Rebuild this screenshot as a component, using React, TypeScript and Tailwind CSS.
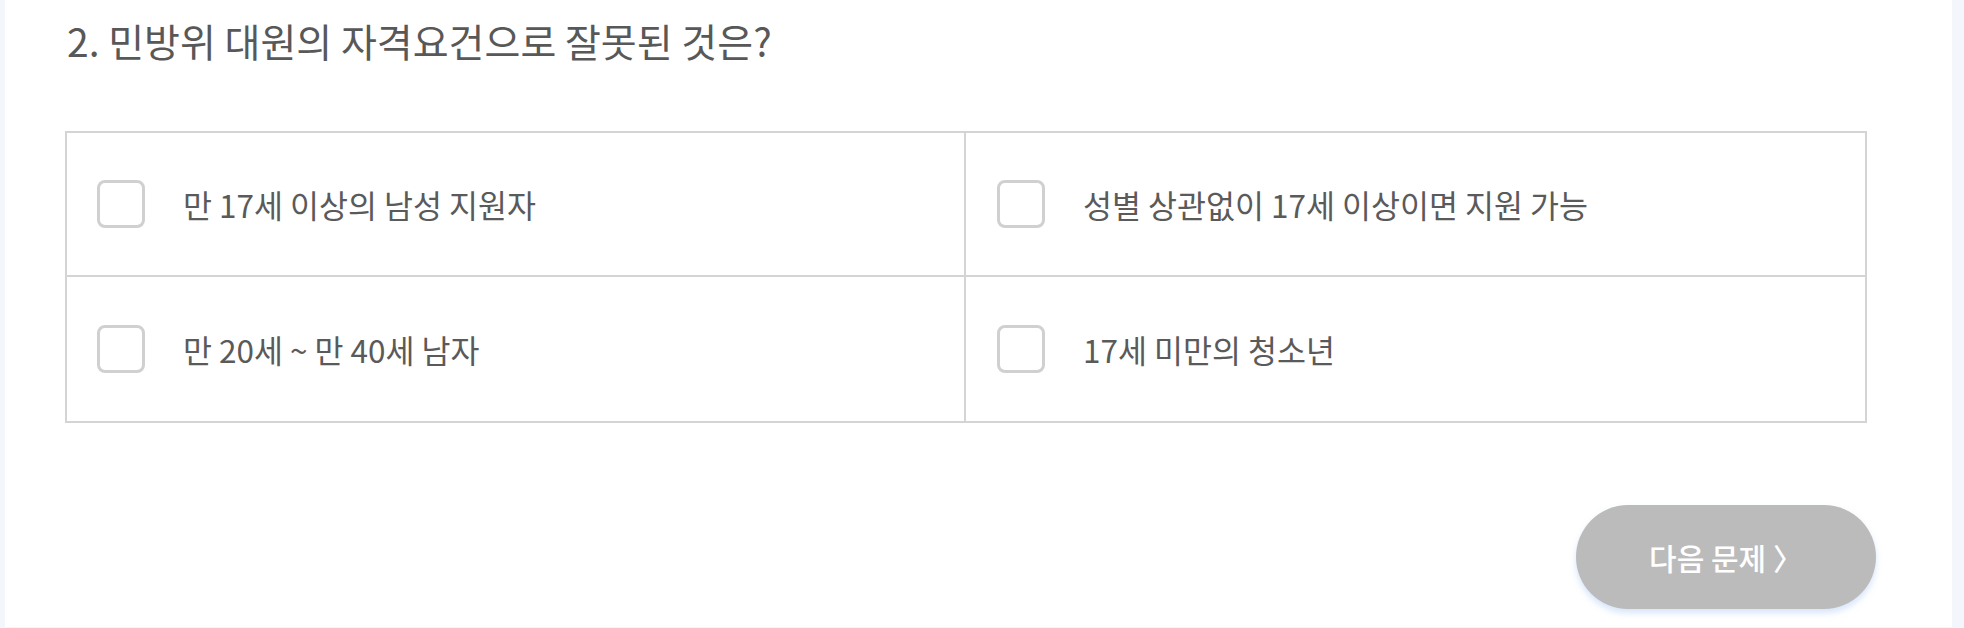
import React from "react";

type Option = {
  id: number;
  label: string;
};

const options: Option[] = [
  { id: 1, label: "만 17세 이상의 남성 지원자" },
  { id: 2, label: "성별 상관없이 17세 이상이면 지원 가능" },
  { id: 3, label: "만 20세 ~ 만 40세 남자" },
  { id: 4, label: "17세 미만의 청소년" },
];

function OptionCell({ option, index }: { option: Option; index: number }) {
  const isLeft = index % 2 === 0;
  const isTop = index < 2;
  return (
    <label
      className={`flex h-[144px] cursor-pointer items-center pl-[30px] ${isLeft ? "border-r-2 border-[#d4d4d4]" : "pl-[31px]"} ${
        isTop ? "border-b-2 border-[#d4d4d4]" : ""
      }`}
    >
      <span className="h-[48px] w-[48px] shrink-0 rounded-[8px] border-[3px] border-[#d0d0d0] bg-white" />
      <span className="ml-[38px] text-[31.5px] leading-[38px] text-[#5a5a5a]">{option.label}</span>
    </label>
  );
}

export default function App() {
  return (
    <div
      className="min-h-screen bg-[#f3f6fb] pl-[5px] pr-[12px]"
      style={{ fontFamily: '"Noto Sans CJK KR", "Noto Sans", sans-serif' }}
    >
      <div className="bg-white pb-[18px] pl-[62px] pr-[76px] pt-[17px]">
        <h2 className="text-[39px] leading-[46px] text-[#585858]">
          2. 민방위 대원의 자격요건으로 잘못된 것은?
        </h2>

        <div className="-ml-[2px] mr-[9px] mt-[68px] grid grid-cols-2 border-2 border-[#d4d4d4]">
          {options.map((option, i) => (
            <OptionCell key={option.id} option={option} index={i} />
          ))}
        </div>

        <div className="mt-[82px] flex justify-end">
          <button
            type="button"
            className="flex h-[104px] w-[300px] items-center justify-center rounded-full bg-[#bbbbbb] text-[30px] font-medium text-white shadow-[0_4px_6px_rgba(140,180,240,0.35)]"
          >
            다음 문제 〉
          </button>
        </div>
      </div>
    </div>
  );
}
